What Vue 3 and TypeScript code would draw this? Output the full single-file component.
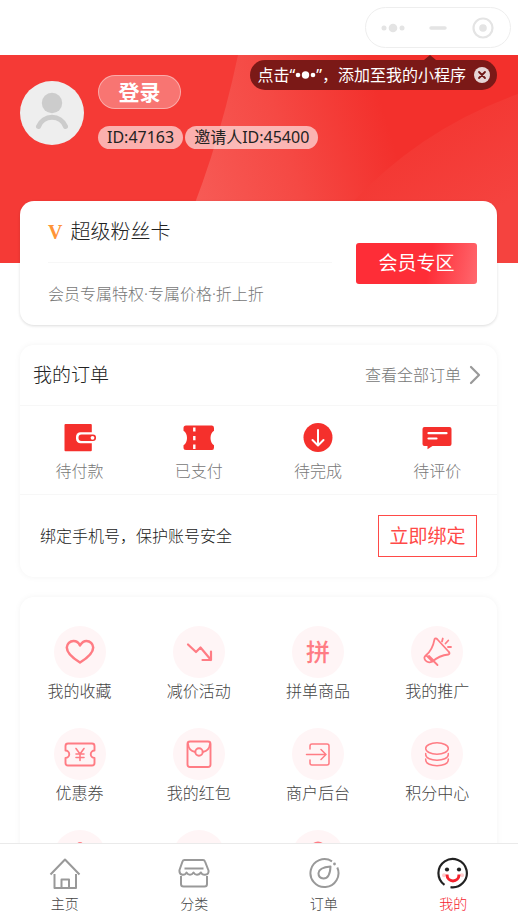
<script setup lang="ts">
interface Item {
  icon: string
  label: string
}

const orders: Item[] = [
  { icon: 'wallet', label: '待付款' },
  { icon: 'ticket', label: '已支付' },
  { icon: 'done', label: '待完成' },
  { icon: 'comment', label: '待评价' },
]

const services: Item[] = [
  { icon: 'heart', label: '我的收藏' },
  { icon: 'drop', label: '减价活动' },
  { icon: 'group', label: '拼单商品' },
  { icon: 'horn', label: '我的推广' },
  { icon: 'coupon', label: '优惠券' },
  { icon: 'packet', label: '我的红包' },
  { icon: 'enter', label: '商户后台' },
  { icon: 'coins', label: '积分中心' },
]

const moreIcons: string[] = ['dot', 'blank', 'ring']

const tabs: Item[] = [
  { icon: 'home', label: '主页' },
  { icon: 'shop', label: '分类' },
  { icon: 'compass', label: '订单' },
  { icon: 'smile', label: '我的' },
]
const activeTab = '我的'
</script>

<template>
  <div class="page">
    <header class="nav">
      <div class="capsule">
        <svg class="capsule-icon" viewBox="0 0 26 26"><g fill="#e4e4e4"><circle cx="4" cy="13" r="2.5" /><circle cx="13" cy="13" r="4.3" /><circle cx="22" cy="13" r="2.5" /></g></svg>
        <svg class="capsule-icon" viewBox="0 0 26 26"><path d="M6 13h14" stroke="#e4e4e4" stroke-width="3.500" stroke-linecap="round" /></svg>
        <svg class="capsule-icon" viewBox="0 0 26 26"><circle cx="13" cy="13" r="9.5" fill="none" stroke="#e4e4e4" stroke-width="2.200" /><circle cx="13" cy="13" r="3.800" fill="#e4e4e4" /></svg>
      </div>
    </header>

    <main class="content">
      <section class="hero">
        <svg class="hero-art" viewBox="0 0 518 208" preserveAspectRatio="none">
          <defs>
            <linearGradient id="beam" gradientUnits="userSpaceOnUse" x1="200" y1="170" x2="400" y2="110">
              <stop offset="0" stop-color="#f75b56" />
              <stop offset=".5" stop-color="#f54944" />
              <stop offset="1" stop-color="#f3302c" />
            </linearGradient>
            <linearGradient id="arc" gradientUnits="userSpaceOnUse" x1="410" y1="70" x2="470" y2="170">
              <stop offset="0" stop-color="#f33631" />
              <stop offset="1" stop-color="#f5433f" />
            </linearGradient>
          </defs>
          <path d="M238 0H518V208H170Q215 110 238 0Z" fill="url(#beam)" />
          <path d="M518 39Q420 74 350 150V208H518Z" fill="url(#arc)" />
        </svg>
        <div class="profile">
          <svg class="avatar" viewBox="0 0 64 64">
            <circle cx="32" cy="32" r="32" fill="#eee" />
            <circle cx="32" cy="22" r="10.2" fill="#ccc" />
            <path d="M18.500 45.500a14.500 14.500 0 0 1 27 0" fill="none" stroke="#ccc" stroke-width="5" stroke-linecap="round" />
          </svg>
          <div class="identity">
            <button class="login" type="button">登录</button>
            <div class="ids">
              <span class="id">ID:47163</span>
              <span class="id">邀请人ID:45400</span>
            </div>
          </div>
        </div>
        <div class="tip">
          <span class="tip-text">点击“<svg class="tip-dots" viewBox="0 0 21 10"><g fill="#fff"><circle cx="3" cy="5" r="2.300" /><circle cx="10.500" cy="5" r="3.700" /><circle cx="18" cy="5" r="2.300" /></g></svg>”，添加至我的小程序</span>
          <button class="tip-close" type="button">
            <svg viewBox="0 0 16 16"><circle cx="8" cy="8" r="8" fill="#e6d6d6" /><path d="M5 5l6 6M11 5l-6 6" stroke="#6d1715" stroke-width="1.800" stroke-linecap="round" /></svg>
          </button>
        </div>
      </section>

      <section class="card member">
        <div class="member-info">
          <h2 class="member-title"><span class="vip">V</span>超级粉丝卡</h2>
          <p class="member-desc">会员专属特权·专属价格·折上折</p>
        </div>
        <button class="member-button" type="button">会员专区</button>
      </section>

      <section class="card">
        <div class="order-head">
          <h2 class="order-title">我的订单</h2>
          <a class="order-all" href="#">查看全部订单
            <svg class="chevron" viewBox="0 0 12 20"><path d="M2 2l8 8-8 8" fill="none" stroke="#999" stroke-width="2.200" stroke-linecap="round" stroke-linejoin="round" /></svg>
          </a>
        </div>
        <nav class="orders">
          <a v-for="item in orders" :key="item.label" class="order" href="#">
            <svg class="order-icon" viewBox="0 0 32 32">
              <template v-if="item.icon === 'wallet'">
                <path d="M1.500 2h25.300a1 1 0 0 1 1 1v25.300a1 1 0 0 1-1 1H1.500a1 1 0 0 1-1-1V3a1 1 0 0 1 1-1Z" fill="#f5302c" />
                <rect x="12" y="10.300" width="26" height="11" rx="4.500" fill="#fff" />
                <rect x="14.500" y="12.600" width="17.500" height="6.400" rx="3" fill="#f5302c" />
                <circle cx="28.500" cy="15.800" r="1.900" fill="#fff" />
              </template>
              <template v-else-if="item.icon === 'ticket'">
                <path d="M3 3.400h26q2 0 2 2.500v2.800q-3.500 2.300-3.500 7.300t3.500 7.300v2.300q0 2.500-2 2.500H3q-2.500 0-2.500-2.500v-2.300Q4 21 4 16T.5 8.700V5.900Q.5 3.400 3 3.400Z" fill="#f5302c" />
                <path d="M11.300 5.500v4M11.300 14v4.200M11.300 22.500v4.500" stroke="#fff" stroke-width="2.400" />
              </template>
              <template v-else-if="item.icon === 'done'">
                <circle cx="16" cy="15.500" r="14.500" fill="#f5302c" />
                <path d="M16 8v15M10.500 18l5.500 5.500 5.500-5.500" fill="none" stroke="#fff" stroke-width="2" stroke-linecap="round" stroke-linejoin="round" />
              </template>
              <template v-else>
                <path d="M3.500 5h25a2 2 0 0 1 2 2v15a2 2 0 0 1-2 2h-17l-5 3.200V24h-3a2 2 0 0 1-2-2V7a2 2 0 0 1 2-2Z" fill="#f5302c" />
                <path d="M7.500 11.200h18M7.500 16.500h8" stroke="#fff" stroke-width="2.200" stroke-linecap="round" />
              </template>
            </svg>
            {{ item.label }}
          </a>
        </nav>
        <div class="bind">
          <p class="bind-text">绑定手机号，保护账号安全</p>
          <button class="bind-button" type="button">立即绑定</button>
        </div>
      </section>

      <nav class="card services">
        <a v-for="item in services" :key="item.label" class="service" href="#">
          <span class="bubble">
            <span v-if="item.icon === 'group'" class="glyph">拼</span>
            <svg v-else class="service-icon" viewBox="0 0 32 32">
              <path v-if="item.icon === 'heart'" d="M16 26.500Q2.800 18.500 2.800 11.500A6.800 6.800 0 0 1 9.500 5Q14 5 16 9.500Q18.500 5 22.500 5A6.800 6.800 0 0 1 29.200 11.500Q29.200 18.500 16 26.500Z" stroke-width="2.500" />
              <path v-else-if="item.icon === 'drop'" d="M5 8.500l8 7.500 4.500-4.500L28 24M28 15.500V24h-8.500" stroke-width="2.200" />
              <template v-else-if="item.icon === 'horn'">
                <path d="M13.500 3.300Q11.500 14 5 19.200L11.500 25.500Q18 19.500 27.500 18.500Q29.500 17.500 27.500 15.500L16.500 3.500Q14.500 1.500 13.500 3.300ZM5 19.200Q2 21.500 4.500 24.500T11.500 25.500M8 20l5 5M12 24.500l4.500 4.500" stroke-width="1.800" />
                <path d="M21 5.500l.8-3M24.500 7.500l2.800-3M27 11h3" stroke-width="1.800" />
              </template>
              <template v-else-if="item.icon === 'coupon'">
                <path d="M4 5.500h24q2.500 0 2.500 2.500v4.500a3.600 3.600 0 0 0 0 7.500v5q0 2.500-2.500 2.500H4q-2.500 0-2.500-2.500v-5a3.600 3.600 0 0 0 0-7.500V8q0-2.500 2.500-2.500Z" stroke-width="1.900" />
                <path d="M12 10.500l4 5.500 4-5.500M16 16v6.500M12 16h8M12 19.500h8" stroke-width="1.600" />
              </template>
              <template v-else-if="item.icon === 'packet'">
                <rect x="4.500" y="3.500" width="23" height="25.500" rx="2.500" stroke-width="1.900" />
                <path d="M5 6Q5.500 12.500 12.300 14M27 6Q26.500 12.500 19.700 14" stroke-width="1.900" /><circle cx="16" cy="14" r="3.700" stroke-width="1.900" />
              </template>
              <path v-else-if="item.icon === 'enter'" d="M8 11V8q0-2 2-2h15q2 0 2 2v17q0 2-2 2H10q-2 0-2-2v-3M4.500 16.500H24M19 11.500l5 5-5 5" stroke-width="1.500" />
              <template v-else>
                <ellipse cx="16" cy="10.500" rx="11.300" ry="5.700" stroke-width="1.500" />
                <path d="M4.700 16.500c0 7.600 22.600 7.600 22.600 0M4.700 22c0 7.600 22.600 7.600 22.600 0M4.700 15.500v1M27.300 15.500v1M4.700 21v1M27.300 21v1" stroke-width="1.500" />
              </template>
            </svg>
          </span>
          {{ item.label }}
        </a>
        <span v-for="icon in moreIcons" :key="icon" class="bubble">
          <svg class="service-icon" viewBox="0 0 32 32">
            <circle v-if="icon === 'dot'" cx="16" cy="5" r="2" stroke-width="2" />
            <circle v-else-if="icon === 'ring'" cx="16" cy="9" r="6.500" stroke-width="2.200" />
          </svg>
        </span>
      </nav>
    </main>

    <nav class="tabs">
      <a v-for="tab in tabs" :key="tab.label" class="tab" :class="{ active: tab.label === activeTab }" href="#">
        <svg class="tab-icon" viewBox="0 0 32 32">
          <path v-if="tab.icon === 'home'" d="M1.500 17.500L16 2.500l14.500 15M5.500 17v14h21.500V17M12.500 31v-8.500h7.500V31" />
          <path v-else-if="tab.icon === 'shop'" d="M6.500 3h18.500q1.500 0 2 1.500l3.500 9q.5 4-3.500 4.300-3 .2-4-2.300-2 2.300-4 2.300t-3.500-2.300Q14 17.800 12 17.800T8.500 15.500Q7.500 18 4.500 17.800 1 17 1.500 13l3-8.500q.5-1.500 2-1.500ZM6.500 11.500h19M3 19v8q0 2.500 2.500 2.500h21q2.500 0 2.500-2.500v-8" />
          <template v-else-if="tab.icon === 'compass'">
            <path d="M24 4.300A14 14 0 1 0 29.300 10.500M22.500 9.500q-.5 12-7 12-5.200-.5-5-5.500Q11 10.500 22.500 9.500Z" />
            <circle class="speck" cx="26.500" cy="7" r="1.400" />
          </template>
          <template v-else>
            <path class="face" d="M7.500 27.800A14.200 14.200 0 1 1 13.500 30.200" />
            <circle cx="10" cy="12.500" r="2.100" fill="#222" stroke="none" /><circle cx="22" cy="12.500" r="2.100" fill="#222" stroke="none" />
            <g fill="#fcc" stroke="none"><circle cx="7" cy="18.300" r="2" /><circle cx="25" cy="18.300" r="2" /></g>
            <path class="mouth" d="M10 17.500c0 8.500 12 8.500 12 0" />
          </template>
        </svg>
        {{ tab.label }}
      </a>
    </nav>
  </div>
</template>

<style>
body {
  margin: 0;
  background: #fff;
}
</style>

<style scoped>
.page {
  display: flex;
  flex-direction: column;
  height: 100vh;
  font-family: "Noto Sans", "Noto Sans CJK SC", sans-serif;
  font-size: 16px;
  font-weight: 300;
  line-height: 24px;
  color: #222;
}
h2,
p {
  margin: 0;
  font-weight: inherit;
}
a {
  color: inherit;
  text-decoration: none;
}
button {
  padding: 0;
  border: 0;
  font: inherit;
  cursor: pointer;
}
svg {
  display: block;
}
.nav {
  display: flex;
  flex: none;
  justify-content: flex-end;
  align-items: center;
  box-sizing: border-box;
  height: 55px;
  padding: 0 7px;
}
.capsule {
  display: flex;
  justify-content: space-between;
  align-items: center;
  box-sizing: border-box;
  width: 146px;
  height: 41px;
  padding: 0 14px;
  border: 1px solid #eee;
  border-radius: 21px;
}
.capsule-icon {
  width: 26px;
  height: 26px;
}
.content {
  flex: 1;
  min-height: 0;
  overflow-y: auto;
  scrollbar-width: none;
}
.hero {
  position: relative;
  box-sizing: border-box;
  height: 208px;
  padding: 20px;
  background: #f53a36;
}
.hero-art {
  position: absolute;
  inset: 0;
  width: 100%;
  height: 100%;
}
.profile {
  position: relative;
  display: flex;
  gap: 14px;
}
.avatar {
  width: 64px;
  height: 64px;
  margin-top: 6px;
}
.login {
  display: block;
  box-sizing: border-box;
  width: 83px;
  height: 34px;
  border: 1px solid rgba(255, 255, 255, 0.4);
  border-radius: 17px;
  background: rgba(255, 255, 255, 0.3);
  color: #fff;
  font-size: 21px;
  font-weight: 700;
  line-height: 32px;
}
.ids {
  display: flex;
  gap: 2px;
  margin-top: 17px;
}
.id {
  padding: 0 9px;
  border-radius: 12px;
  background: rgba(255, 255, 255, 0.6);
  color: #222;
  font-weight: 400;
  line-height: 23px;
}
.tip {
  position: absolute;
  top: 5px;
  right: 21px;
  display: flex;
  align-items: center;
  gap: 8px;
  height: 30px;
  padding: 0 7px 0 8px;
  border-radius: 15px;
  background: #7b1917;
  color: #fff;
  white-space: nowrap;
}
.tip::before {
  content: "";
  position: absolute;
  top: -5px;
  right: 61px;
  border: 6px solid transparent;
  border-top: 0;
  border-bottom: 5px solid #7b1917;
}
.tip-text {
  display: flex;
  align-items: center;
  font-weight: 400;
}
.tip-dots {
  width: 21px;
  height: 10px;
}
.tip-close {
  width: 16px;
  height: 16px;
  background: none;
}
.card {
  margin: 0 21px 20px 20px;
  border-radius: 14px;
  background: #fff;
  box-shadow: 0 0 6px rgba(0, 0, 0, 0.05);
}
.member {
  position: relative;
  display: flex;
  align-items: center;
  justify-content: space-between;
  gap: 24px;
  height: 124px;
  margin-top: -62px;
  padding: 0 20px 0 28px;
  box-shadow: 0 1px 3px rgba(0, 0, 0, 0.14);
}
.member-info {
  flex: 1;
}
.member-title {
  display: flex;
  align-items: center;
  gap: 8px;
  height: 61px;
  border-bottom: 1px solid #f7f7f7;
  font-size: 20px;
}
.vip {
  color: #ff9436;
  font-family: "Liberation Serif", serif;
  font-weight: 700;
}
.member-desc {
  color: #777;
  line-height: 62px;
}
.member-button {
  width: 121px;
  height: 41px;
  border-radius: 3px;
  background: linear-gradient(100deg, #fe2d37 60%, #ff686e);
  color: #fff;
  font-size: 19px;
  font-weight: 400;
}
.order-head {
  display: flex;
  align-items: center;
  justify-content: space-between;
  height: 60px;
  padding: 0 16px 0 13px;
  border-bottom: 1px solid #f7f7f7;
}
.order-title {
  font-size: 19px;
}
.order-all {
  display: flex;
  align-items: center;
  gap: 8px;
  color: #777;
}
.chevron {
  width: 12px;
  height: 20px;
}
.orders {
  display: grid;
  grid-template-columns: repeat(4, 1fr);
  height: 88px;
  border-bottom: 1px solid #f7f7f7;
}
.order {
  display: flex;
  flex-direction: column;
  align-items: center;
  gap: 5px;
  padding-top: 16px;
  color: #777;
}
.order-icon {
  width: 32px;
  height: 32px;
}
.bind {
  display: flex;
  align-items: center;
  justify-content: space-between;
  height: 82px;
  padding: 0 20px;
}
.bind-button {
  width: 99px;
  height: 42px;
  border: 1px solid #ff4a48;
  background: #fff;
  color: #ff4a48;
  font-size: 19px;
  font-weight: 400;
}
.services {
  display: grid;
  grid-template-columns: repeat(4, 1fr);
  justify-items: center;
  row-gap: 24px;
  padding: 29px 0;
}
.service {
  display: flex;
  flex-direction: column;
  align-items: center;
  color: #444;
  line-height: 26px;
}
.bubble {
  display: flex;
  align-items: center;
  justify-content: center;
  width: 52px;
  height: 52px;
  border-radius: 50%;
  background: #fff5f6;
}
.service-icon {
  width: 32px;
  height: 32px;
  fill: none;
  stroke: #ff7c84;
  stroke-linecap: round;
  stroke-linejoin: round;
}
.glyph {
  color: #ff7c84;
  font-size: 24px;
  font-weight: 500;
}
.tabs {
  position: relative;
  display: grid;
  flex: none;
  grid-template-columns: repeat(4, 1fr);
  height: 76px;
  border-top: 1px solid #eaeaea;
  background: #fff;
}
.tab {
  display: flex;
  flex-direction: column;
  align-items: center;
  gap: 3px;
  padding-top: 13px;
  color: #444;
  font-size: 14px;
}
.tab.active {
  color: #f5222d;
}
.tab-icon {
  width: 32px;
  height: 32px;
  fill: none;
  stroke: #999;
  stroke-width: 2;
  stroke-linejoin: round;
}
.speck {
  fill: #999;
  stroke: none;
}
.face {
  stroke: #222;
  stroke-width: 2.2;
}
.mouth {
  stroke: #f5222d;
  stroke-width: 3;
}
</style>
